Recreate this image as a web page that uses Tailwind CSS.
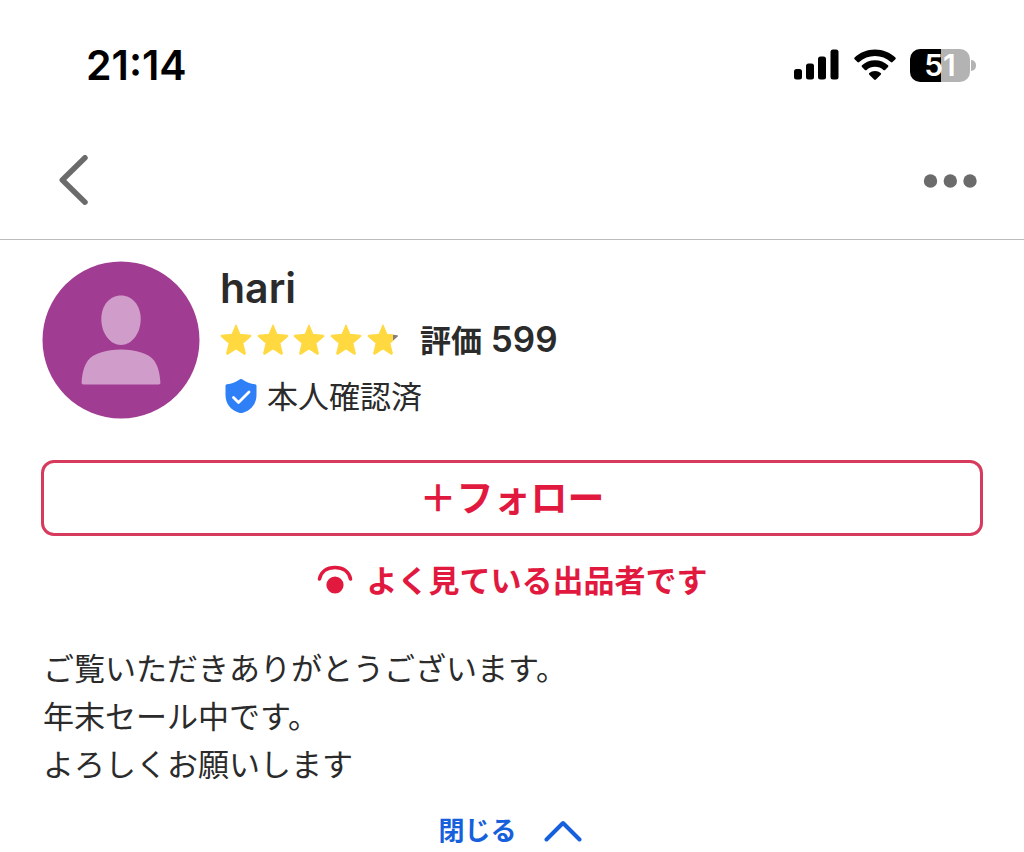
<!DOCTYPE html>
<html lang="ja">
<head>
    <meta charset="UTF-8">
    <meta name="viewport" content="width=device-width, initial-scale=1.0">
    <title>hari</title>
    <script src="https://cdn.jsdelivr.net/npm/@tailwindcss/browser@4"></script>
</head>
<body class="bg-white text-[#2b2b2b] font-['Inter','Noto_Sans_CJK_JP',sans-serif]">
    <!-- status bar -->
    <div class="flex items-center justify-between h-[130px] pl-[86px] pr-12 text-black">
        <time class="text-[41px] leading-none font-semibold">21:14</time>
        <div class="flex items-center gap-[14px]">
            <svg class="w-[46px] h-8" viewBox="0 0 46 32" fill="currentColor">
                <rect x="0" y="20" width="8" height="10.500" rx="2.5"/>
                <rect x="12" y="14.500" width="8" height="16" rx="2.5"/>
                <rect x="24" y="7.500" width="8" height="23" rx="2.5"/>
                <rect x="36.500" y="0.500" width="8" height="30" rx="2.5"/>
            </svg>
            <svg class="w-[42px] h-8" viewBox="0 0 42 32" fill="currentColor">
                <path d="M21 .5C13 .5 5.800 3.500.6 8.500c-.5.500-.5 1.200 0 1.700l2.900 2.900c.5.500 1.200.500 1.700 0C9.400 9.200 15 7 21 7s11.600 2.200 15.800 6.100c.5.500 1.200.500 1.700 0l2.900-2.900c.5-.5.500-1.200 0-1.700C36.200 3.500 29 .5 21 .5z"/>
                <path d="M21 11.200c-5 0-9.600 1.900-13 5.100-.5.500-.5 1.200 0 1.700l2.900 2.900c.5.500 1.200.500 1.700 0 2.200-2 5.200-3.200 8.400-3.200s6.200 1.200 8.400 3.200c.5.500 1.200.500 1.700 0L34 18c.5-.5.500-1.200 0-1.700-3.400-3.200-8-5.100-13-5.100z"/>
                <path d="M21 22c-2.200 0-4.200.8-5.700 2.100-.5.400-.5 1.100 0 1.600l4.800 4.800c.5.500 1.300.500 1.800 0l4.800-4.800c.5-.5.500-1.200 0-1.600C25.200 22.800 23.200 22 21 22z"/>
            </svg>
            <div class="flex items-center gap-px">
                <div class="flex items-center justify-center w-[60px] h-[33px] rounded-[10px] bg-linear-to-r from-black from-52% to-[#b3b3b3] to-52% text-white text-[30px] leading-none font-semibold">51</div>
                <div class="w-[5px] h-[11px] rounded-r-full bg-[#b3b3b3]"></div>
            </div>
        </div>
    </div>

    <!-- nav -->
    <header class="flex items-center justify-between h-[110px] pb-2 pl-14 pr-[47px] border-b border-[#bcbcbc] text-[#6b6b6b]">
        <button type="button" aria-label="戻る">
            <svg class="w-9 h-[52px]" viewBox="0 0 36 52" fill="none" stroke="currentColor" stroke-width="5.500" stroke-linecap="round" stroke-linejoin="round">
                <path d="M29 2.800L6.300 25l22.700 22.200"/>
            </svg>
        </button>
        <button type="button" aria-label="メニュー">
            <svg class="w-[54px] h-4" viewBox="0 0 54 16" fill="currentColor">
                <circle cx="7.500" cy="8" r="6.700"/>
                <circle cx="27.300" cy="8" r="6.700"/>
                <circle cx="47" cy="8" r="6.700"/>
            </svg>
        </button>
    </header>

    <main class="px-[41px] pt-[21px]">
        <!-- profile -->
        <section class="flex gap-[20px] pl-px">
            <svg class="w-[158px] h-[158px] shrink-0" viewBox="0 0 158 158">
                <circle cx="79" cy="79" r="78.500" fill="#a03c92"/>
                <path d="M79 34.500c11.500 0 19.700 10 19.700 23.500 0 14.500-9 26-19.700 26s-19.700-11.500-19.700-26c0-13.500 8.200-23.500 19.700-23.500z" fill="#d09cca"/>
                <path d="M41.500 123.500c-1.300 0-2-.8-1.900-2 .6-9.500 2.400-16.500 6.300-22 5.300-7 18.100-11 33.100-11s27.800 4 33.100 11c3.900 5.500 5.700 12.500 6.300 22 .1 1.200-.6 2-1.900 2z" fill="#d09cca"/>
            </svg>
            <div class="flex flex-col">
                <h1 class="text-[41px] leading-[54px] font-semibold">hari</h1>
                <div class="flex items-center h-12">
                    <svg class="w-[180px] h-8" viewBox="0 0 180 32" role="img" aria-label="評価">
                        <defs>
                            <path id="star" d="M16 1.800l4 9.600 10.300.8c.7.100 1 .9.400 1.400l-7.800 6.700 2.500 10.100c.2.700-.6 1.200-1.200.9L16 25.900l-8.200 5.400c-.6.300-1.400-.2-1.200-.9l2.500-10.100-7.800-6.700c-.6-.5-.3-1.300.4-1.400l10.300-.8z"/>
                            <clipPath id="rated"><rect width="173" height="32"/></clipPath>
                            <clipPath id="unrated"><rect x="173" width="7" height="18"/></clipPath>
                        </defs>
                        <g fill="#857d78" clip-path="url(#unrated)">
                            <use href="#star" x="147"/>
                        </g>
                        <g fill="#ffd93f" stroke="#ffd93f" stroke-width="1" stroke-linejoin="round" clip-path="url(#rated)">
                            <use href="#star"/>
                            <use href="#star" x="37"/>
                            <use href="#star" x="73"/>
                            <use href="#star" x="110"/>
                            <use href="#star" x="147"/>
                        </g>
                    </svg>
                    <p class="pl-5 text-[35px] leading-none font-semibold"><span class="text-[31px]">評価</span> 599</p>
                </div>
                <div class="flex items-center gap-[10px] h-[66px] pl-[5px]">
                    <svg class="w-8 h-9" viewBox="0 0 32 36">
                        <path d="M15 1.200c.6-.4 1.400-.4 2 0 4.500 3 8.500 4.500 13 5 .9.100 1.500.8 1.500 1.700V17c0 8.500-5 15-13.500 17.800-1.300.4-2.700.4-4 0C5.500 32 .5 25.500.5 17V7.900c0-.9.6-1.600 1.500-1.700 4.500-.5 8.500-2 13-5z" fill="#2f80f7"/>
                        <path d="M8.500 19.500l5 5 10.500-10.500" fill="none" stroke="#fff" stroke-width="2.800" stroke-linecap="round" stroke-linejoin="round"/>
                    </svg>
                    <span class="text-[31px] leading-none">本人確認済</span>
                </div>
            </div>
        </section>

        <button type="button" class="flex items-center justify-center w-full h-[76px] mt-[31px] border-[3px] border-[#d63a5c] rounded-[13px] text-[37px] leading-none font-bold text-[#e2193f]">＋フォロー</button>

        <div class="flex items-center justify-center gap-[14px] h-[88px] text-[#e2193f]">
            <svg class="w-9 h-[30px]" viewBox="0 0 36 30">
                <path d="M2.500 14C4 6.500 10 2.500 18 2.500S32 6.500 33.500 14" fill="none" stroke="currentColor" stroke-width="3.600" stroke-linecap="round"/>
                <circle cx="18" cy="20" r="8.600" fill="currentColor"/>
            </svg>
            <p class="text-[31px] leading-none font-bold">よく見ている出品者です</p>
        </div>

        <p class="pt-[21px] pl-0.5 text-[31px] leading-[48px]">
            ご覧いただきありがとうございます。<br>
            年末セール中です。<br>
            よろしくお願いします
        </p>

        <button type="button" class="flex items-center justify-center gap-[27px] w-full h-[60px] mt-3 pr-1 text-[26px] leading-none font-bold text-[#1660dc]">
            閉じる
            <svg class="w-[38px] h-[22px]" viewBox="0 0 38 22" fill="none" stroke="currentColor" stroke-width="4" stroke-linecap="round" stroke-linejoin="round">
                <path d="M2.500 19.500L19 3l16.500 16.500"/>
            </svg>
        </button>
    </main>
</body>
</html>
